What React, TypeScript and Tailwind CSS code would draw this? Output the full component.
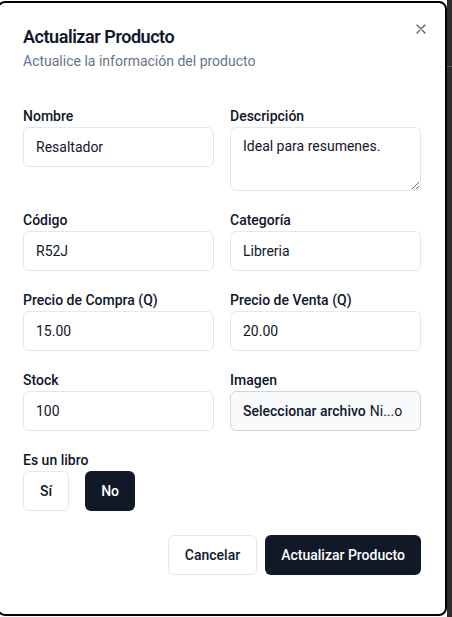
import React from "react";

function Field({ label, children }: { label: string; children: React.ReactNode }) {
  return (
    <div className="flex flex-col gap-px">
      <label className="block h-5 text-sm leading-5 font-medium text-[#0f172a]">{label}</label>
      {children}
    </div>
  );
}

function TextInput({ value }: { value: string }) {
  return (
    <input
      readOnly
      value={value}
      className="h-10 w-full rounded-md border border-[#e2e8f0] bg-white px-3 text-sm leading-5 text-[#0f172a] outline-none"
    />
  );
}

export default function App() {
  return (
    <div
      className="flex h-[617px] w-[452px] overflow-hidden bg-white"
      style={{ fontFamily: "Roboto, 'Liberation Sans', sans-serif" }}
    >
      <div className="relative mt-px ml-[-3px] h-[615px] w-[450px] shrink-0 rounded-lg border-2 border-black bg-white px-6 pt-6">
        <button className="absolute top-[18px] right-[16px] flex h-4 w-4 items-center justify-center text-[#374151] opacity-80">
          <svg width="10" height="10" viewBox="0 0 10 10" fill="none" stroke="currentColor" strokeWidth="1.4" strokeLinecap="round">
            <path d="M1 1L9 9M9 1L1 9" />
          </svg>
        </button>

        <div className="flex flex-col">
          <h2 className="mt-px text-lg leading-none font-semibold tracking-tight text-[#0f172a]">Actualizar Producto</h2>
          <p className="mt-[5px] text-sm leading-5 text-[#64748b]">Actualice la información del producto</p>
        </div>

        <div className="mt-[35px] grid grid-cols-2 gap-x-4 gap-y-[19px]">
          <Field label="Nombre">
            <TextInput value="Resaltador" />
          </Field>
          <Field label="Descripción">
            <textarea
              readOnly
              value="Ideal para resumenes."
              className="h-[64px] w-full resize-y rounded-md border border-[#e2e8f0] bg-white px-3 py-2 text-sm leading-5 text-[#0f172a] outline-none"
            />
          </Field>
          <Field label="Código">
            <TextInput value="R52J" />
          </Field>
          <Field label="Categoría">
            <TextInput value="Libreria" />
          </Field>
          <Field label="Precio de Compra (Q)">
            <TextInput value="15.00" />
          </Field>
          <Field label="Precio de Venta (Q)">
            <TextInput value="20.00" />
          </Field>
          <Field label="Stock">
            <TextInput value="100" />
          </Field>
          <Field label="Imagen">
            <div className="flex h-10 w-full items-center rounded-md border border-[#d1d5db] bg-[#f8fafc] px-3 text-sm leading-5 text-[#0f172a]">
              <span className="font-medium">Seleccionar archivo</span>
              <span className="ml-1">Ni...o</span>
            </div>
          </Field>
          <div className="col-span-2 flex flex-col gap-px">
            <label className="block h-5 text-sm leading-5 font-medium text-[#0f172a]">Es un libro</label>
            <div className="flex gap-4">
              <button className="h-10 rounded-md border border-[#e2e8f0] bg-white px-4 text-sm font-medium text-[#0f172a]">Sí</button>
              <button className="h-10 rounded-md bg-[#111827] px-4 text-sm font-medium text-white">No</button>
            </div>
          </div>
        </div>

        <div className="mt-6 flex justify-end gap-2">
          <button className="h-10 rounded-md border border-[#e2e8f0] bg-white px-4 text-sm font-medium text-[#0f172a]">Cancelar</button>
          <button className="h-10 rounded-md bg-[#111827] px-4 text-sm font-medium text-white">Actualizar Producto</button>
        </div>
      </div>
      <div className="flex-1 self-stretch bg-[#2c2c2c]">
        <div className="mt-[66px] h-px bg-[#5a5a5a]" />
      </div>
    </div>
  );
}
